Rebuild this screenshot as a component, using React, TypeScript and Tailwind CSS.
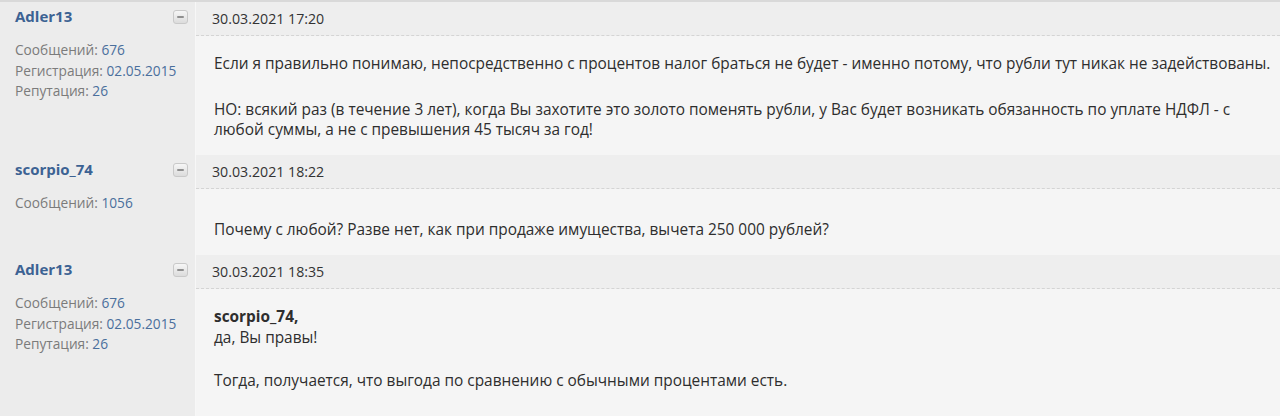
import React from 'react';

type Stat = { label: string; value: string };

type Post = {
  author: string;
  stats: Stat[];
  date: string;
  height: string;
  body: React.ReactNode;
};

const posts: Post[] = [
  {
    author: 'Adler13',
    stats: [
      { label: 'Сообщений', value: '676' },
      { label: 'Регистрация', value: '02.05.2015' },
      { label: 'Репутация', value: '26' },
    ],
    date: '30.03.2021 17:20',
    height: 'h-[153px]',
    body: (
      <>
        <p>
          Если я правильно понимаю, непосредственно с процентов налог браться не будет - именно потому, что рубли
          тут никак не задействованы.
        </p>
        <p className="mt-[25px]">
          НО: всякий раз (в течение 3 лет), когда Вы захотите это золото поменять рубли, у Вас будет возникать
          обязанность по уплате НДФЛ - с<br />
          любой суммы, а не с превышения 45 тысяч за год!
        </p>
      </>
    ),
  },
  {
    author: 'scorpio_74',
    stats: [{ label: 'Сообщений', value: '1056' }],
    date: '30.03.2021 18:22',
    height: 'h-[100px]',
    body: (
      <p className="mt-[13px]">Почему с любой? Разве нет, как при продаже имущества, вычета 250 000 рублей?</p>
    ),
  },
  {
    author: 'Adler13',
    stats: [
      { label: 'Сообщений', value: '676' },
      { label: 'Регистрация', value: '02.05.2015' },
      { label: 'Репутация', value: '26' },
    ],
    date: '30.03.2021 18:35',
    height: 'h-[161px]',
    body: (
      <>
        <p className="font-bold">scorpio_74,</p>
        <p>да, Вы правы!</p>
        <p className="mt-[23px]">Тогда, получается, что выгода по сравнению с обычными процентами есть.</p>
      </>
    ),
  },
];

function CollapseButton() {
  return (
    <span className="mt-[4px] flex h-[14px] w-[15px] items-center justify-center rounded-[3px] border border-[#c9c9c9] bg-gradient-to-b from-[#f6f6f6] to-[#dcdcdc]">
      <span className="h-[2px] w-[7px] rounded-full bg-[#8f8f8f]" />
    </span>
  );
}

function PostRow({ post }: { post: Post }) {
  return (
    <div className={`flex ${post.height}`}>
      <aside className="w-[196px] shrink-0 border-r border-[#f7f7f7] bg-[#ececec] pl-[15px] pr-[7px] pt-[4px]">
        <div className="flex items-start justify-between">
          <span className="text-[15px] font-bold leading-[20px] text-[#3c6293]">{post.author}</span>
          <CollapseButton />
        </div>
        <div className="mt-[14px] text-[13.7px] leading-[20.5px] text-[#7b7b7b]">
          {post.stats.map((s) => (
            <div key={s.label}>
              {s.label}: <span className="text-[#4a6f9c]">{s.value}</span>
            </div>
          ))}
        </div>
      </aside>
      <section className="flex min-w-0 flex-1 flex-col bg-[#f5f5f5]">
        <div className="flex h-[34px] shrink-0 items-center border-b border-dashed border-[#d4d4d4] bg-[#eeeeee] pl-[16px] text-[14.2px] text-[#333]">
          {post.date}
        </div>
        <div className="flex-1 pl-[18px] pr-[4px] pt-[18px] text-[15.4px] leading-[20.5px] text-[#2e2e2e]">
          {post.body}
        </div>
      </section>
    </div>
  );
}

export default function App() {
  return (
    <div
      className="h-[416px] w-[1280px] overflow-hidden border-t-[2px] border-[#d9d9d9] bg-[#f5f5f5]"
      style={{ fontFamily: '"Open Sans", "Noto Sans", sans-serif' }}
    >
      {posts.map((p, i) => (
        <PostRow key={i} post={p} />
      ))}
    </div>
  );
}
